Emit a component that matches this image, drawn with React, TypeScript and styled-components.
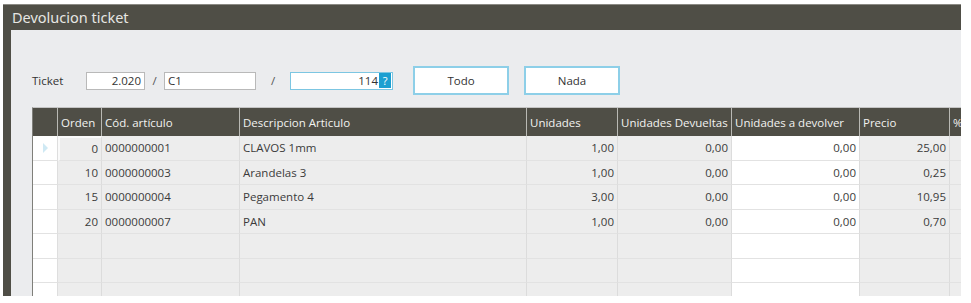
import styled, { createGlobalStyle } from 'styled-components'

type Line = {
  orden : number
  codigo : string
  descripcion : string
  unidades : string
  devueltas : string
  devolver : string
  precio : string
}

const lines : Line[] = [
  { orden: 0, codigo: '0000000001', descripcion: 'CLAVOS 1mm', unidades: '1,00', devueltas: '0,00', devolver: '0,00', precio: '25,00' },
  { orden: 10, codigo: '0000000003', descripcion: 'Arandelas 3', unidades: '1,00', devueltas: '0,00', devolver: '0,00', precio: '0,25' },
  { orden: 15, codigo: '0000000004', descripcion: 'Pegamento 4', unidades: '3,00', devueltas: '0,00', devolver: '0,00', precio: '10,95' },
  { orden: 20, codigo: '0000000007', descripcion: 'PAN', unidades: '1,00', devueltas: '0,00', devolver: '0,00', precio: '0,70' },
]

const COLS = '25px 44px 138px 287px 91px 114px 128px 90px 60px'

const GlobalStyle = createGlobalStyle`
  body {
    margin: 0;
    background: #fff;
    font-family: "Open Sans", "Noto Sans", sans-serif;
  }
`

function App () {
  const empty = [0, 1, 2]

  return (
    <>
      <GlobalStyle />
      <Window>
        <TitleBar>Devolucion ticket</TitleBar>
        <Body>
          <LeftEdge />
          <Content>
            <Toolbar>
              <Label>Ticket</Label>
              <Field $w={59} $align="right">2.020</Field>
              <Slash>/</Slash>
              <Field $w={92}>C1</Field>
              <Slash $wide>/</Slash>
              <Field $w={103} $align="right" $focus>
                114<Help>?</Help>
              </Field>
              <Buttons>
                <Button>Todo</Button>
                <Button>Nada</Button>
              </Buttons>
            </Toolbar>

            <Grid>
              <Head />
              <Head>Orden</Head>
              <Head>Cód. artículo</Head>
              <Head>Descripcion Articulo</Head>
              <Head>Unidades</Head>
              <Head>Unidades Devueltas</Head>
              <Head>Unidades a devolver</Head>
              <Head>Precio</Head>
              <Head>%</Head>

              {lines.map((l, i) => (
                <Row key={l.codigo}>
                  <Selector>{i === 0 && <Arrow />}</Selector>
                  <Cell $num $current={i === 0}>{l.orden}</Cell>
                  <Cell>{l.codigo}</Cell>
                  <Cell>{l.descripcion}</Cell>
                  <Cell $num>{l.unidades}</Cell>
                  <Cell $num>{l.devueltas}</Cell>
                  <Cell $num $edit>{l.devolver}</Cell>
                  <Cell $num>{l.precio}</Cell>
                  <Cell />
                </Row>
              ))}

              {empty.map((n) => (
                <Row key={'e' + n}>
                  <Selector />
                  <Cell />
                  <Cell />
                  <Cell />
                  <Cell />
                  <Cell />
                  <Cell $edit />
                  <Cell />
                  <Cell />
                </Row>
              ))}
            </Grid>
          </Content>
        </Body>
      </Window>
    </>
  )
}

const Window = styled.div`
  margin: 4px 0 0 3px;
  width: 958px;
  height: 292px;
  display: flex;
  flex-direction: column;
  overflow: hidden;
`

const TitleBar = styled.div`
  height: 25px;
  border-top: 1px solid #8b8a84;
  background: #4f4e46;
  color: #e6e6e3;
  font-family: "Noto Sans", "Open Sans", sans-serif;
  font-size: 14.5px;
  line-height: 24px;
  padding-left: 9px;
`

const Body = styled.div`
  flex: 1;
  display: flex;
  min-height: 0;
`

const LeftEdge = styled.div`
  width: 8px;
  background: #4f4e46;
`

const Content = styled.div`
  flex: 1;
  min-width: 0;
  background: #ebecee;
  padding: 36px 0 0 21px;
  overflow: hidden;
`

const Toolbar = styled.div`
  display: flex;
  align-items: center;
  height: 29px;
  font-size: 11.5px;
  color: #333;
`

const Label = styled.span`
  width: 54px;
`

const Field = styled.div<{ $w : number, $align? : string, $focus? : boolean }>`
  box-sizing: border-box;
  width: ${p => p.$w}px;
  height: 18px;
  background: #fff;
  border: 1px solid ${p => p.$focus ? '#7cc6e2' : '#b9b9b9'};
  display: flex;
  align-items: center;
  justify-content: ${p => p.$align === 'right' ? 'flex-end' : 'flex-start'};
  padding: 0 3px;
  color: #333;
  ${p => p.$focus && 'padding-right: 1px;'}
`

const Slash = styled.span<{ $wide? : boolean }>`
  width: ${p => p.$wide ? 34 : 19}px;
  text-align: center;
  color: #555;
`

const Help = styled.span`
  width: 12px;
  height: 15px;
  margin-left: 1px;
  background: #1c9fd1;
  color: #fff;
  font-size: 11px;
  line-height: 15px;
  text-align: center;
`

const Buttons = styled.div`
  display: flex;
  gap: 15px;
  margin-left: 20px;
`

const Button = styled.div`
  box-sizing: border-box;
  width: 96px;
  height: 29px;
  background: #fff;
  border: 2px solid #8dcfe8;
  display: flex;
  align-items: center;
  justify-content: center;
  color: #333;
`

const Grid = styled.div`
  margin-top: 12px;
  display: grid;
  grid-template-columns: ${COLS};
  grid-auto-rows: 24.5px;
  grid-template-rows: 28px;
  border-top: 1px solid #c4c4c4;
  border-left: 1px solid #7f7f7a;
  width: max-content;
  font-size: 11.5px;
`

const Head = styled.div`
  background: #4f4e46;
  color: #f2f2f0;
  border-right: 1px solid #b9b9b4;
  display: flex;
  align-items: center;
  padding-left: 3px;
  white-space: nowrap;
  overflow: hidden;
`

const Row = styled.div`
  display: contents;
`

const Selector = styled.div`
  background: #fff;
  border-right: 1px solid #dedede;
  border-bottom: 1px solid #e2e2e2;
  display: flex;
  align-items: center;
  padding-left: 10px;
`

const Arrow = styled.span`
  width: 0;
  height: 0;
  border-top: 5px solid transparent;
  border-bottom: 5px solid transparent;
  border-left: 5px solid #cfe9f4;
`

const Cell = styled.div<{ $num? : boolean, $edit? : boolean, $current? : boolean }>`
  box-sizing: border-box;
  background: ${p => p.$edit ? '#fff' : '#ededed'};
  border-right: 1px solid #dcdcdc;
  border-bottom: 1px solid #e2e2e2;
  display: flex;
  align-items: center;
  justify-content: ${p => p.$num ? 'flex-end' : 'flex-start'};
  padding: 0 3px;
  color: #3b3b3b;
  white-space: nowrap;
  overflow: hidden;
  ${p => p.$current && `
    border-top: 2px solid #fafafa;
    border-left: 2px solid #fafafa;
  `}
`

export default App
